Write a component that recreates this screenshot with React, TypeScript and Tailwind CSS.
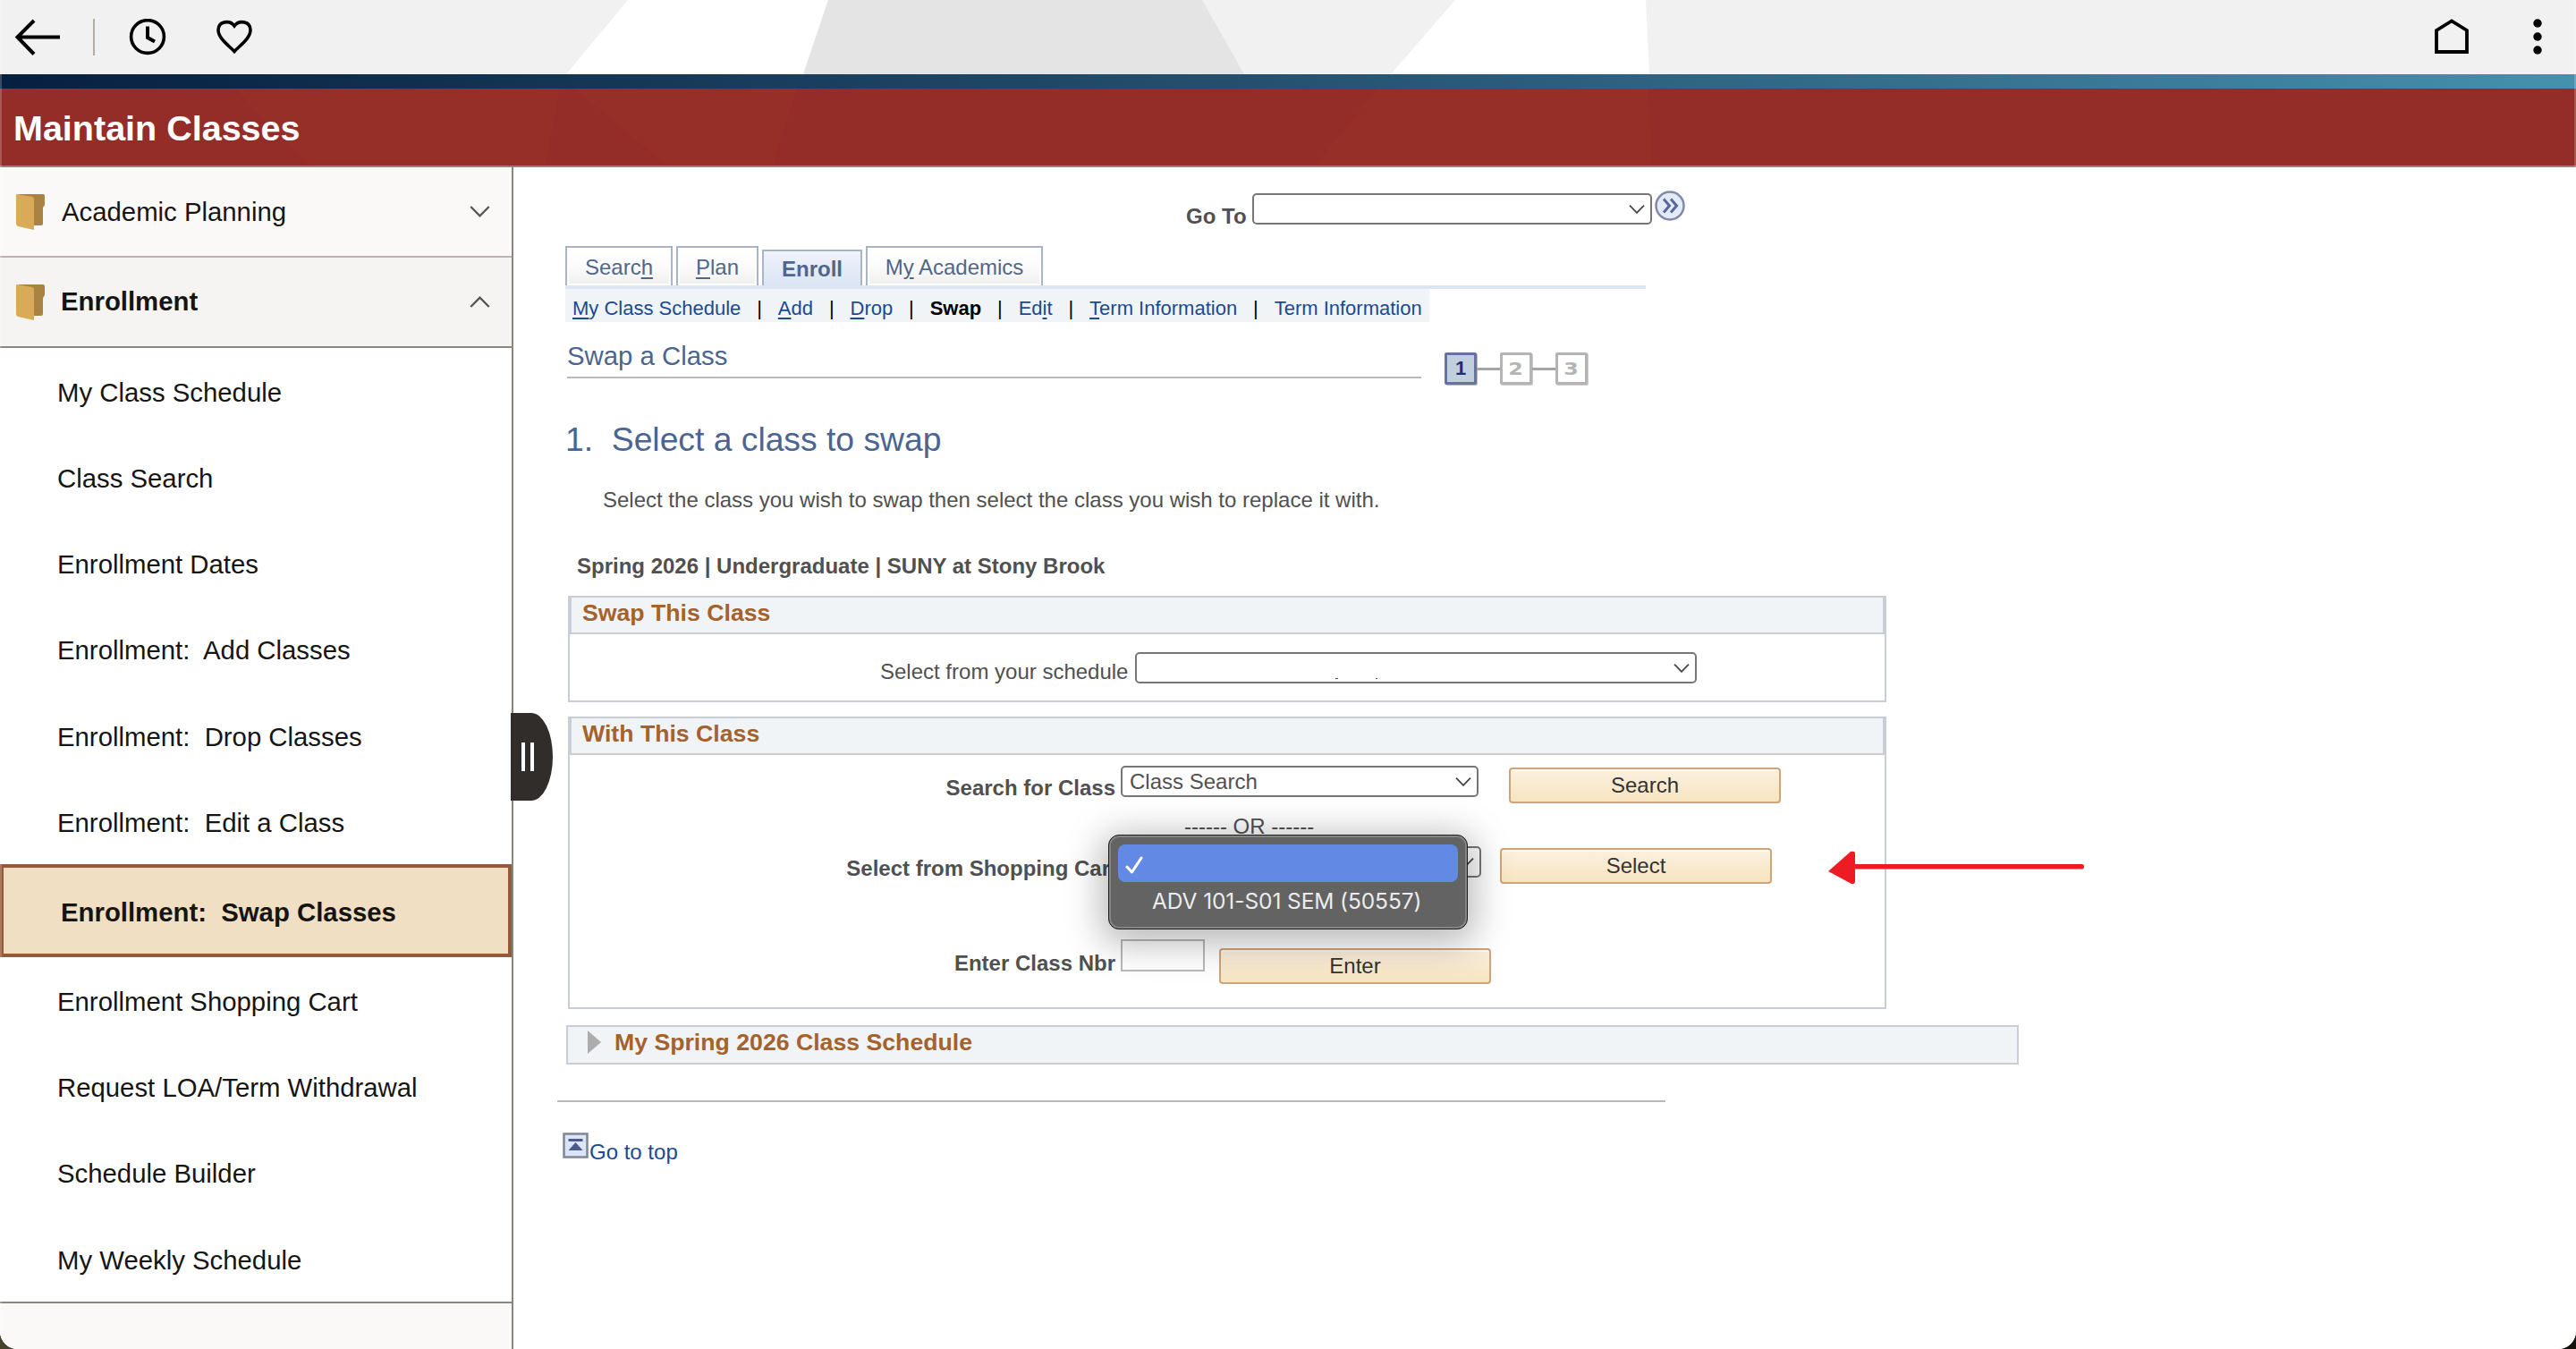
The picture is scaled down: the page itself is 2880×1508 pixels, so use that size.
import type { ReactNode } from "react";

const U = ({ children }: { children: ReactNode }) => (
  <span className="underline decoration-2 underline-offset-[3px]">{children}</span>
);

function Chevron({ up = false, className = "" }: { up?: boolean; className?: string }) {
  return (
    <svg viewBox="0 0 18 10" fill="none" stroke="currentColor" strokeWidth="1.8" className={className}>
      <path d={up ? "M1 9.3 9 1.2 17 9.3" : "M1 .7 9 8.8 17 .7"} />
    </svg>
  );
}

function Folder() {
  return (
    <svg viewBox="0 0 32 40" className="h-10 w-8 shrink-0">
      <path d="M1 0H30Q32 0 32 2V12L30 15V33Q30 35 28 35H14V4Z" fill="#a98342" />
      <path d="M0 0 18 3Q20 3.500 20 6V40L2 36Q0 35 0 33Z" fill="#d9ab58" />
    </svg>
  );
}

function TopBar() {
  return (
    <header className="relative flex h-[83px] items-center bg-[#f1f1f1] text-black">
      <svg viewBox="0 0 2880 83" className="absolute inset-0 h-[83px] w-[2880px]">
        <path d="M702 0H926L898 83H633Z" fill="#fff" />
        <path d="M926 0H1344L1391 83H898Z" fill="#e4e4e4" />
        <path d="M1627 0H1840L1844 83H1555Z" fill="#fff" />
      </svg>
      <div className="relative flex w-full items-center pl-[16px]">
        <svg viewBox="0 0 52 42" className="h-[42px] w-[52px]" fill="none" stroke="#000" strokeWidth="4">
          <path d="M51 20.500H4M22 2 3.500 20.500 22 39.500" />
        </svg>
        <span className="ml-[36px] h-[41px] w-[2px] bg-[#b3ada5]" />
        <svg viewBox="0 0 42 42" className="ml-[38px] h-[42px] w-[42px]" fill="none" stroke="#000" strokeWidth="3.6">
          <circle cx="21" cy="20" r="18.4" />
          <path d="M21 8.500V21L29 25.500" strokeWidth="4" />
        </svg>
        <svg viewBox="0 0 42 42" className="ml-[55px] h-[42px] w-[42px]" fill="none" stroke="#000" strokeWidth="3.6">
          <path d="M21 36.500C15 30 3 22 3 12.500C3 2.500 16 1 21 8C26 1 39 2.500 39 12.500C39 22 27 30 21 36.500Z" />
        </svg>
        <div className="flex-1" />
        <svg viewBox="0 0 38 42" className="h-[42px] w-[38px]" fill="none" stroke="#000" strokeWidth="3.8">
          <path d="M2 37V13L19 2.500 36 13V37Z" />
        </svg>
        <svg viewBox="0 0 10 42" className="mr-[38px] ml-[72px] h-[42px] w-[10px]">
          <circle cx="5" cy="5" r="4.700" />
          <circle cx="5" cy="20" r="4.700" />
          <circle cx="5" cy="35" r="4.700" />
        </svg>
      </div>
    </header>
  );
}

function TitleBar() {
  return (
    <>
      <div className="h-4 bg-linear-to-r from-[#08203f] via-[#255270] to-[#4491ae]" />
      <div className="relative h-[88px] border-b-2 border-[#8b8580] bg-[#942d27]">
        <svg viewBox="0 0 2880 86" className="absolute inset-0 h-[86px] w-[2880px]" fill="#972f29">
          <path d="M263 0H626L610 86H345Z" />
          <path d="M643 0H891L864 86H745Z" />
          <path d="M1540 0H1843L1847 86H1470Z" />
        </svg>
        <h1 className="relative pt-[2px] pl-[15px] text-[39.5px] leading-[84px] font-bold text-white">Maintain Classes</h1>
      </div>
    </>
  );
}

const before = [
  "My Class Schedule",
  "Class Search",
  "Enrollment Dates",
  "Enrollment:\u00a0 Add Classes",
  "Enrollment:\u00a0 Drop Classes",
  "Enrollment:\u00a0 Edit a Class",
];
const after = ["Enrollment Shopping Cart", "Request LOA/Term Withdrawal", "Schedule Builder", "My Weekly Schedule"];

function Sidebar() {
  return (
    <nav className="relative flex w-[574px] shrink-0 flex-col border-r-2 border-[#8b8580] bg-white text-[29.33px] text-[#161513]">
      <div className="flex h-[101px] items-center border-b-2 border-[#bab5ae] bg-[#fbf9f8] pl-[18px]">
        <Folder />
        <span className="ml-[19px] flex-1">Academic Planning</span>
        <Chevron className="mr-[24px] h-[13px] w-[23px] text-[#555]" />
      </div>
      <div className="flex h-[101px] items-center border-b-2 border-[#8b8580] bg-[#f5f4f2] pl-[18px]">
        <Folder />
        <span className="ml-[18px] flex-1 pb-[2px] font-bold">Enrollment</span>
        <Chevron up className="mr-[24px] h-[13px] w-[23px] text-[#555]" />
      </div>
      <ul className="pl-[64px]">
        {before.map((t) => (
          <li key={t} className="h-[96.170px] leading-[100px]">{t}</li>
        ))}
      </ul>
      <div className="h-[104px] border-4 border-[#955a39] bg-[#f0dfc2] pl-[64px] leading-[100px] font-bold">
        Enrollment:{"\u00a0"} Swap Classes
      </div>
      <ul className="pl-[64px]">
        {after.map((t) => (
          <li key={t} className="h-[96.250px] leading-[100px]">{t}</li>
        ))}
      </ul>
      <div className="flex-1 border-t-2 border-[#8b8580] bg-[#faf9f7]" />
      <div className="absolute top-[610px] left-[571px] z-10 flex h-[98px] w-[47px] items-center gap-[6px] rounded-r-[24px_49px] bg-[#312d2a] pl-[12px]">
        <span className="h-8 w-1 bg-white" />
        <span className="h-8 w-1 bg-white" />
      </div>
    </nav>
  );
}

function SelectBox({ className, children }: { className: string; children?: ReactNode }) {
  return (
    <div className={`flex h-[35px] items-center justify-between rounded-[5px] border-2 border-[#767676] bg-white pr-[6px] pl-[8px] leading-[31px] text-[#505050] ${className}`}>
      <span>{children}</span>
      <Chevron className="h-[10px] w-[18px] text-[#444]" />
    </div>
  );
}

function Button({ className, children }: { className: string; children: ReactNode }) {
  return (
    <div className={`h-10 w-[304px] rounded-[4px] border-2 border-[#d0a479] bg-linear-to-b from-[#fcf0df] to-[#f6e5c0] text-center leading-[36px] text-[#333] shadow-[inset_0_2px_0_#fff9f0] ${className}`}>
      {children}
    </div>
  );
}

function Tab({ className = "", children }: { className?: string; children: ReactNode }) {
  return (
    <div className={`h-[44px] border-2 border-b-0 border-[#a9b4c6] bg-linear-to-b from-white via-[#fbfbfb] to-[#efefef] text-center leading-[44px] shadow-[inset_0_0_0_2px_#fff] ${className}`}>
      {children}
    </div>
  );
}

const Sep = () => <span className="w-[41.500px] text-center text-black">|</span>;

function Step({ n, active = false }: { n: number; active?: boolean }) {
  return (
    <span
      className={
        active
          ? "flex h-[36px] w-[36px] items-center justify-center rounded-[2px] border-[3px] border-[#6673a0] bg-[#c1cedd] text-[#1f2f73] shadow-[1px_1px_0_#bbb]"
          : "flex h-[36px] w-[36px] items-center justify-center rounded-[2px] border-[3px] border-[#b4b4b4] bg-white text-[#b4b4b4] shadow-[1px_1px_0_#ccc]"
      }
    >
      <span
        className={
          active
            ? "inline-block text-[22px] leading-[30px] font-bold"
            : "inline-block scale-x-125 font-['DejaVu_Sans'] text-[19px] leading-[30px] font-bold"
        }
      >
        {n}
      </span>
    </span>
  );
}

function Group({ title, className, children }: { title: string; className: string; children: ReactNode }) {
  return (
    <section className={`ml-[61px] w-[1474px] border-2 border-[#c9ced6] ${className}`}>
      <h3 className="h-[41px] border-x-2 border-b-2 border-[#c9ced6] bg-[#f1f4f6] pl-[12px] text-[26.67px] leading-[35px] font-bold text-[#a4622c]">
        {title}
      </h3>
      {children}
    </section>
  );
}

function Popup() {
  return (
    <div className="absolute top-[-13px] -left-[14px] z-20 h-[106px] w-[402px] rounded-[12px] border border-[#1d1d1d] bg-[#636363] px-[10px] pt-[10px] font-['Inter'] text-[#ececec] shadow-[inset_0_0_0_2px_#858585,0_8px_40px_8px_rgba(0,0,0,0.28)]">
      <div className="flex h-[42px] items-center rounded-[8px] bg-[#628ae5] pl-[8px]">
        <svg viewBox="0 0 20 20" className="mt-[4px] h-5 w-5" fill="none" stroke="#fff" strokeWidth="3" strokeLinecap="round" strokeLinejoin="round">
          <path d="M2 12 7.500 18 18 2" />
        </svg>
      </div>
      <div className="pl-[38px] text-[24.5px] leading-[43px] tracking-[-0.1px] whitespace-nowrap">ADV 101-S01 SEM (50557)</div>
    </div>
  );
}

function Content() {
  return (
    <main className="relative flex-1 bg-white text-[24px] text-[#505050]">
      <div className="flex h-[88px] items-start pt-[26px]">
        <span className="ml-[752px] w-[74px] pt-[16px] leading-[26px] font-bold">Go To</span>
        <SelectBox className="mt-[3px] w-[447px]" />
        <svg viewBox="0 0 36 36" className="ml-[2px] h-[36px] w-[36px]">
          <circle cx="18" cy="17" r="15.500" fill="#e3ebfa" stroke="#8089a8" strokeWidth="2.500" />
          <path d="M11 9.500 17.500 17 11 24.500M19 9.500 25.500 17 19 24.500" fill="none" stroke="#5b6698" strokeWidth="3" />
        </svg>
      </div>

      <div className="ml-[58px] flex w-[1208px] items-end gap-1 border-b-4 border-[#dbe5f4] text-[#50678a]">
        <Tab className="w-[120px]">Searc<U>h</U></Tab>
        <Tab className="w-[92px]"><U>P</U>lan</Tab>
        <div className="h-[40px] w-[112px] border-2 border-b-0 border-[#a9b4c6] bg-linear-to-b from-[#eff3fc] to-[#dbe5f4] text-center leading-[40px] font-bold">Enroll</div>
        <Tab className="w-[198px]">M<U>y</U> Academics</Tab>
      </div>
      <div className="ml-[58px] flex h-[37px] w-[966px] bg-[#f1f4f6] pl-[8px] text-[22px] leading-[43px] whitespace-nowrap text-[#1a4a92]">
        <span><U>M</U>y Class Schedule</span><Sep />
        <span><U>A</U>dd</span><Sep />
        <span><U>D</U>rop</span><Sep />
        <span className="font-bold text-black">Swap</span><Sep />
        <span>Ed<U>i</U>t</span><Sep />
        <span><U>T</U>erm Information</span><Sep />
        <span>Term Information</span>
      </div>

      <div className="flex h-[100px] items-start">
        <h2 className="mt-[17px] ml-[60px] h-[46px] w-[955px] border-b-2 border-[#b9b9b9] text-[29.33px] leading-[42px] text-[#4b6591]">Swap a Class</h2>
        <div className="mt-[34px] ml-[26px] flex items-center">
          <Step n={1} active />
          <span className="h-[3px] w-[26px] bg-[#a5a5a5]" />
          <Step n={2} />
          <span className="h-[3px] w-[26px] bg-[#a5a5a5]" />
          <Step n={3} />
        </div>
      </div>

      <h2 className="ml-[58px] h-[62px] text-[37.33px] leading-[63px] tracking-[-0.03px] whitespace-pre text-[#4b6591]">1.{"\u00a0 "}Select a class to swap</h2>
      <p className="mt-[17px] ml-[100px] leading-[40px]">Select the class you wish to swap then select the class you wish to replace it with.</p>
      <p className="mt-[34px] ml-[71px] leading-[39px] font-bold">Spring 2026 | Undergraduate | SUNY at Stony Brook</p>

      <Group title="Swap This Class" className="mt-[14px] h-[119px]">
        <div className="flex items-start pt-[20px] pl-[347px]">
          <span className="w-[285px] pt-[4px] leading-[36px]">Select from your schedule</span>
          <div className="relative">
            <SelectBox className="w-[628px]" />
            <span className="absolute top-[29px] left-[224px] h-px w-[3px] bg-[#555]" />
            <span className="absolute top-[29px] left-[269px] h-px w-[2px] bg-[#555]" />
          </div>
        </div>
      </Group>

      <Group title="With This Class" className="mt-[16px] h-[327px]">
        <div className="flex h-[72px] items-start pt-[12px]">
          <span className="w-[610px] pt-[7px] text-right leading-[36px] font-bold">Search for Class</span>
          <SelectBox className="ml-[6px] w-[400px]">Class Search</SelectBox>
          <Button className="mt-[2px] ml-[34px]">Search</Button>
        </div>
        <div className="-mt-[3px] ml-[687px] h-[22px] leading-[22px]">------ OR ------</div>
        <div className="mt-[11px] flex h-[92px] items-start">
          <span className="w-[612px] pt-[7px] text-right leading-[36px] font-bold">Select from Shopping Cart</span>
          <div className="relative ml-[4px]">
            <SelectBox className="w-[403px]" />
            <Popup />
          </div>
          <Button className="mt-[2px] ml-[21px]">Select</Button>
        </div>
        <div className="mt-[12px] flex items-start">
          <span className="w-[610px] pt-[9px] text-right leading-[36px] font-bold">Enter Class Nbr</span>
          <div className="ml-[6px] h-[36px] w-[94px] border-2 border-[#b9b9b9]" />
          <Button className="mt-[10px] ml-[16px]">Enter</Button>
        </div>
      </Group>

      <section className="mt-[18px] ml-[59px] flex h-[44px] w-[1624px] items-start border-2 border-[#c9ced6] bg-[#f1f4f6] pl-[22px]">
        <svg viewBox="0 0 15 26" className="mt-[4px] h-[26px] w-[15px]"><path d="M0 0 15 13 0 26Z" fill="#adadad" /></svg>
        <h3 className="ml-[15px] text-[26.67px] leading-[35px] font-bold text-[#a4622c]">My Spring 2026 Class Schedule</h3>
      </section>

      <hr className="mt-[40px] ml-[49px] w-[1239px] border-t-2 border-[#b9b9b9]" />
      <div className="mt-[34px] ml-[55px] flex items-start text-[#1a4a92]">
        <svg viewBox="0 0 29 29" className="h-[29px] w-[29px]">
          <rect x="1.500" y="1.500" width="26" height="26" fill="#dbe5f8" stroke="#7f8694" strokeWidth="2.500" />
          <path d="M6.500 8.500H22.500" stroke="#4c5a90" strokeWidth="3" />
          <path d="M14.500 11 22.500 20H6.500Z" fill="#4c5a90" />
        </svg>
        <span className="ml-[1px] pt-[8px] leading-[27px]">Go to top</span>
      </div>

      <svg viewBox="0 0 288 38" className="absolute top-[764px] left-[1469px] h-[38px] w-[288px]" fill="#ed1c24">
        <path d="M1 23 26 1Q31 0 31 3V15H285Q287 15 287 18Q287 20.500 285 20.500H31V35Q30 38 27 37Z" />
      </svg>
    </main>
  );
}

export default function App() {
  return (
    <div className="h-[1508px] w-[2880px] overflow-hidden bg-linear-to-r from-[#45432c] to-[#14110d] font-['Liberation_Sans',sans-serif]">
      <div className="relative flex h-full flex-col overflow-hidden rounded-b-[20px] bg-white">
        <TopBar />
        <TitleBar />
        <div className="flex flex-1">
          <Sidebar />
          <Content />
        </div>
        <div className="pointer-events-none absolute inset-0 border-x-2 border-white/20" />
      </div>
    </div>
  );
}
